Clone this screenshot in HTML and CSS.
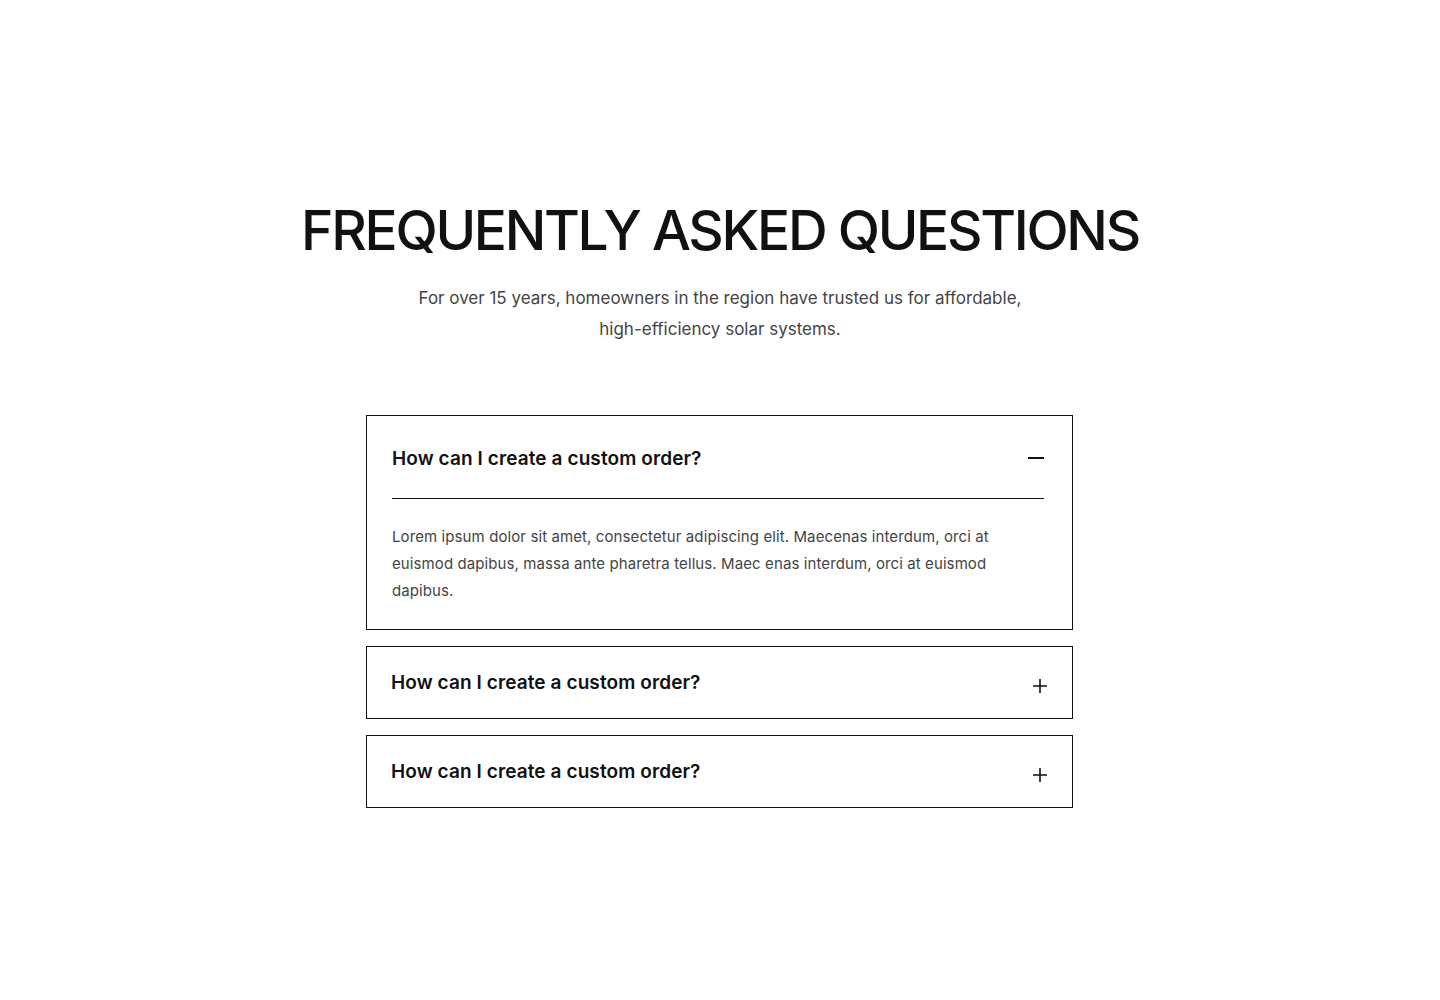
FILE: index.html
```html
<!DOCTYPE html>
<html lang="en">
<head>
    <meta charset="UTF-8">
    <title>FAQ</title>
    <link rel="stylesheet" href="styles.css">
</head>
<body>
    <section class="faq">
        <h1 class="faq-title">FREQUENTLY ASKED QUESTIONS</h1>
        <p class="faq-lead">For over 15 years, homeowners in the region have trusted us for affordable,<br>high-efficiency solar systems.</p>

        <div class="faq-list">
            <div class="faq-item open">
                <div class="faq-head">
                    <span class="faq-q">How can I create a custom order?</span>
                    <span class="faq-icon">
                        <svg width="16" height="16" viewBox="0 0 16 16"><path d="M0 7h16" stroke="#111" stroke-width="2"/></svg>
                    </span>
                </div>
                <div class="faq-body">
                    <p>Lorem ipsum dolor sit amet, consectetur adipiscing elit. Maecenas interdum, orci at euismod dapibus, massa ante pharetra tellus. Maec enas interdum, orci at euismod dapibus.</p>
                </div>
            </div>
            <div class="faq-item">
                <div class="faq-head">
                    <span class="faq-q">How can I create a custom order?</span>
                    <span class="faq-icon plus">
                        <svg width="16" height="16" viewBox="0 0 16 16"><path d="M1 8h14M8 1v14" stroke="#111" stroke-width="1.6"/></svg>
                    </span>
                </div>
            </div>
            <div class="faq-item">
                <div class="faq-head">
                    <span class="faq-q">How can I create a custom order?</span>
                    <span class="faq-icon plus">
                        <svg width="16" height="16" viewBox="0 0 16 16"><path d="M1 8h14M8 1v14" stroke="#111" stroke-width="1.6"/></svg>
                    </span>
                </div>
            </div>
        </div>
    </section>
</body>
</html>
```

FILE: styles.css
```css
body{margin: 0;background: #fff;font-family: Inter, "Noto Sans", sans-serif;color: #111;}
.faq{display: flex;flex-direction: column;align-items: center;padding: 196px 0 120px;}
.faq-title{margin: 0;font-size: 55px;font-weight: 500;line-height: 68px;letter-spacing: -2.3px;color: #111;}
.faq-lead{margin: 19px 0 0;font-size: 17px;line-height: 31px;color: #444;text-align: center;}
.faq-list{display: flex;flex-direction: column;gap: 16px;width: 707px;margin: 70px 1px 0 0;}
.faq-item{border: 1px solid #111;}
.faq-head{display: flex;align-items: center;justify-content: space-between;height: 71px;padding: 0 24px 0 24px;}
.faq-q{font-size: 19px;font-weight: 600;letter-spacing: 0.1px;color: #111;}
.faq-icon{display: flex;width: 16px;height: 16px;}
.faq-icon.plus{margin-top: 6px;}
.faq-item.open .faq-head{height: auto;border-bottom: 1px solid #111;margin: 0 28px 0 25px;padding: 31px 0 28px;}
.faq-body{padding: 24px 28px 25px 25px;}
.faq-body p{margin: 0;font-size: 15px;line-height: 27px;letter-spacing: 0.1px;color: #444;max-width: 615px;}
```
